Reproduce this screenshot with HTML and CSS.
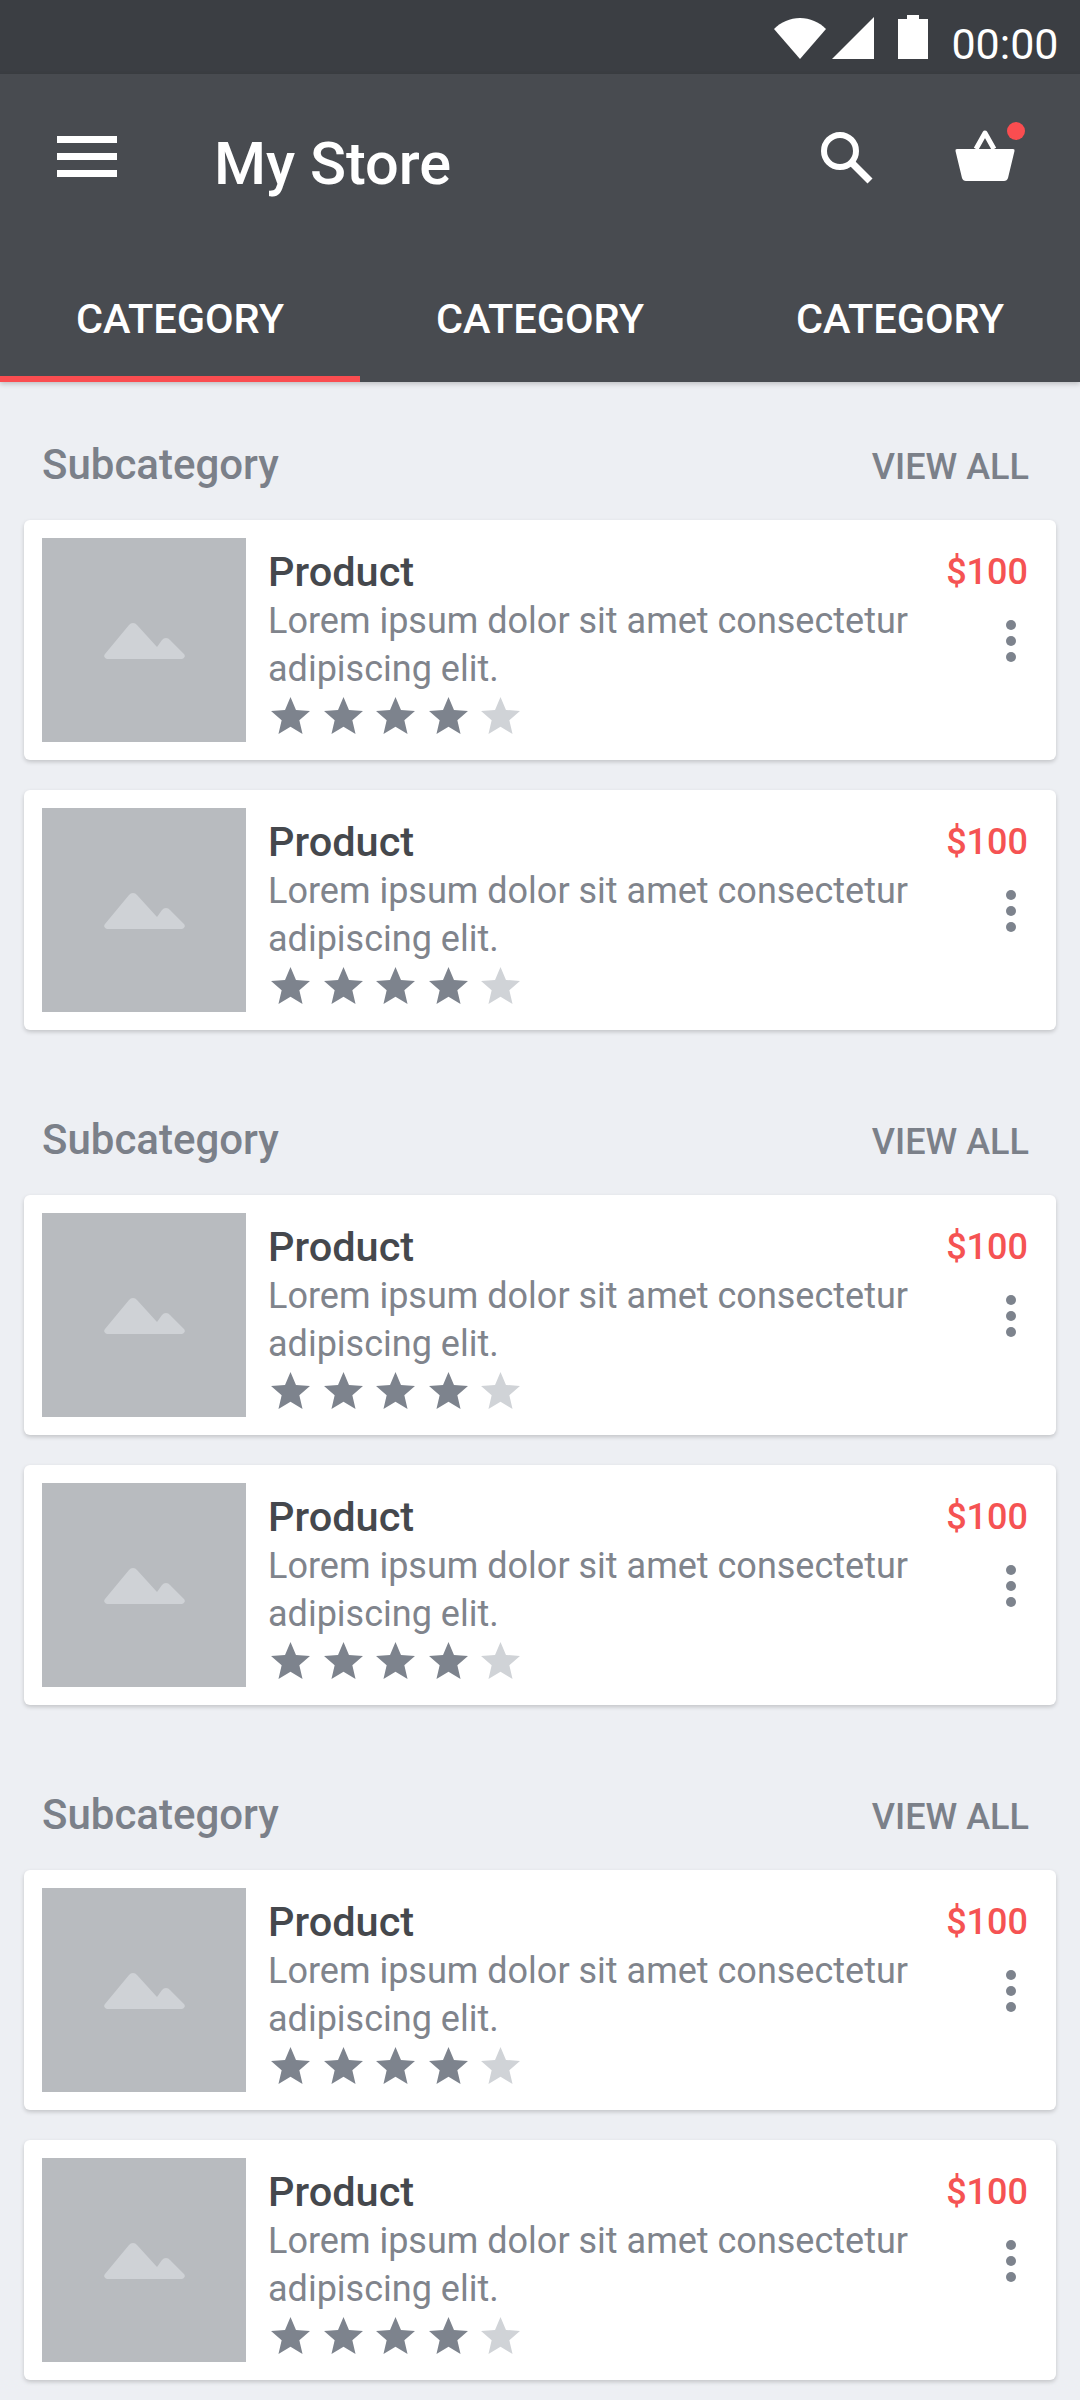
FILE: index.html
```html
<!DOCTYPE html>
<html lang="en">
<head>
    <meta charset="UTF-8">
    <meta name="viewport" content="width=device-width, initial-scale=1.0">
    <title>My Store</title>
    <link rel="stylesheet" href="styles.css">
</head>
<body>
    <svg class="sprites" width="0" height="0">
        <symbol id="star" viewBox="2 2 20 19"><path d="M12 17.27L18.18 21l-1.64-7.03L22 9.24l-7.19-.61L12 2 9.19 8.63 2 9.24l5.46 4.73L5.82 21z"/></symbol>
        <symbol id="mountain" viewBox="0 0 81 37"><path d="M3 37a3 3 0 0 1-2-5L25 3a5 5 0 0 1 8 0l20 22 5-7a5 5 0 0 1 8 0l14 14a3 3 0 0 1-2 5z"/></symbol>
        <symbol id="kebab" viewBox="0 0 10 42"><circle cx="5" cy="5" r="5"/><circle cx="5" cy="21" r="5"/><circle cx="5" cy="37" r="5"/></symbol>
    </svg>

    <div class="status-bar">
        <svg class="wifi" width="52" height="41" viewBox="0 0 52 41"><path d="M26 41L0 11C7 4 16 0 26 0s19 4 26 11z"/></svg>
        <svg class="signal" width="42" height="42" viewBox="0 0 42 42"><path d="M0 42L42 0v42z"/></svg>
        <svg class="battery" width="30" height="44" viewBox="0 0 30 44"><path d="M9 0h12v4h9v40H0V4h9z"/></svg>
        <span class="clock">00:00</span>
    </div>

    <header class="app-bar">
        <div class="toolbar">
            <div class="menu-icon"><span></span><span></span><span></span></div>
            <h1>My Store</h1>
            <svg class="search-icon" width="52" height="52" viewBox="0 0 52 52"><circle cx="19" cy="19" r="16" fill="none" stroke="#fff" stroke-width="6"/><path d="M31 31l18 18" stroke="#fff" stroke-width="7"/></svg>
            <div class="basket">
                <svg width="60" height="51" viewBox="0 0 60 51"><path d="M21 19L30 3l9 16" fill="none" stroke="#fff" stroke-width="5" stroke-linejoin="round"/><path d="M2 19h56q2 0 1.500 2L53 48q-1 3-4 3H11q-3 0-4-3L.5 21Q0 19 2 19z" fill="#fff"/></svg>
                <span class="badge"></span>
            </div>
        </div>
        <nav class="tabs">
            <div class="tab active">CATEGORY</div>
            <div class="tab">CATEGORY</div>
            <div class="tab">CATEGORY</div>
        </nav>
    </header>

    <main class="content">
        <section class="section">
            <div class="section-head"><h2>Subcategory</h2><span class="view-all">VIEW ALL</span></div>
            <article class="card">
                <div class="thumb"><svg width="81" height="37"><use href="#mountain"/></svg></div>
                <div class="info">
                    <div class="name">Product</div>
                    <p class="desc">Lorem ipsum dolor sit amet consectetur adipiscing elit.</p>
                    <div class="stars"><svg><use href="#star"/></svg><svg><use href="#star"/></svg><svg><use href="#star"/></svg><svg><use href="#star"/></svg><svg class="off"><use href="#star"/></svg></div>
                </div>
                <div class="side"><span class="price">$100</span><svg class="more" width="10" height="42"><use href="#kebab"/></svg></div>
            </article>
            <article class="card">
                <div class="thumb"><svg width="81" height="37"><use href="#mountain"/></svg></div>
                <div class="info">
                    <div class="name">Product</div>
                    <p class="desc">Lorem ipsum dolor sit amet consectetur adipiscing elit.</p>
                    <div class="stars"><svg><use href="#star"/></svg><svg><use href="#star"/></svg><svg><use href="#star"/></svg><svg><use href="#star"/></svg><svg class="off"><use href="#star"/></svg></div>
                </div>
                <div class="side"><span class="price">$100</span><svg class="more" width="10" height="42"><use href="#kebab"/></svg></div>
            </article>
        </section>

        <section class="section">
            <div class="section-head"><h2>Subcategory</h2><span class="view-all">VIEW ALL</span></div>
            <article class="card">
                <div class="thumb"><svg width="81" height="37"><use href="#mountain"/></svg></div>
                <div class="info">
                    <div class="name">Product</div>
                    <p class="desc">Lorem ipsum dolor sit amet consectetur adipiscing elit.</p>
                    <div class="stars"><svg><use href="#star"/></svg><svg><use href="#star"/></svg><svg><use href="#star"/></svg><svg><use href="#star"/></svg><svg class="off"><use href="#star"/></svg></div>
                </div>
                <div class="side"><span class="price">$100</span><svg class="more" width="10" height="42"><use href="#kebab"/></svg></div>
            </article>
            <article class="card">
                <div class="thumb"><svg width="81" height="37"><use href="#mountain"/></svg></div>
                <div class="info">
                    <div class="name">Product</div>
                    <p class="desc">Lorem ipsum dolor sit amet consectetur adipiscing elit.</p>
                    <div class="stars"><svg><use href="#star"/></svg><svg><use href="#star"/></svg><svg><use href="#star"/></svg><svg><use href="#star"/></svg><svg class="off"><use href="#star"/></svg></div>
                </div>
                <div class="side"><span class="price">$100</span><svg class="more" width="10" height="42"><use href="#kebab"/></svg></div>
            </article>
        </section>

        <section class="section">
            <div class="section-head"><h2>Subcategory</h2><span class="view-all">VIEW ALL</span></div>
            <article class="card">
                <div class="thumb"><svg width="81" height="37"><use href="#mountain"/></svg></div>
                <div class="info">
                    <div class="name">Product</div>
                    <p class="desc">Lorem ipsum dolor sit amet consectetur adipiscing elit.</p>
                    <div class="stars"><svg><use href="#star"/></svg><svg><use href="#star"/></svg><svg><use href="#star"/></svg><svg><use href="#star"/></svg><svg class="off"><use href="#star"/></svg></div>
                </div>
                <div class="side"><span class="price">$100</span><svg class="more" width="10" height="42"><use href="#kebab"/></svg></div>
            </article>
            <article class="card">
                <div class="thumb"><svg width="81" height="37"><use href="#mountain"/></svg></div>
                <div class="info">
                    <div class="name">Product</div>
                    <p class="desc">Lorem ipsum dolor sit amet consectetur adipiscing elit.</p>
                    <div class="stars"><svg><use href="#star"/></svg><svg><use href="#star"/></svg><svg><use href="#star"/></svg><svg><use href="#star"/></svg><svg class="off"><use href="#star"/></svg></div>
                </div>
                <div class="side"><span class="price">$100</span><svg class="more" width="10" height="42"><use href="#kebab"/></svg></div>
            </article>
        </section>
    </main>
</body>
</html>
```

FILE: styles.css
```css
* {
    box-sizing: border-box;
}
body {
    font-family: Roboto, "Liberation Sans", sans-serif;
    margin: 0;
    width: 1080px;
    height: 2400px;
    overflow: hidden;
    background-color: #edeff3;
}
.sprites {
    position: absolute;
}

/* status bar */
.status-bar {
    display: flex;
    justify-content: flex-end;
    align-items: baseline;
    height: 74px;
    padding: 15px 21.5px 0 0;
    background-color: #3b3e43;
    color: #fff;
}
.status-bar svg {
    fill: #fff;
}
.signal {
    margin-left: 6px;
}
.battery {
    margin-left: 24px;
}
.clock {
    margin-left: 23.5px;
    font-size: 43px;
    line-height: 42px;
}

/* app bar */
.app-bar {
    position: relative;
    background-color: #484b50;
    color: #fff;
    box-shadow: 0 2px 5px rgba(0, 0, 0, 0.2);
}
.toolbar {
    display: flex;
    align-items: flex-start;
    height: 198px;
    padding: 56px 65px 0 57px;
}
.menu-icon {
    display: flex;
    flex-direction: column;
    gap: 10px;
    width: 60px;
    margin-top: 6px;
}
.menu-icon span {
    height: 7px;
    background-color: #fff;
}
h1 {
    margin: -1px 0 0 97px;
    font-size: 59.5px;
    font-weight: 500;
    line-height: 70px;
}
.search-icon {
    margin: 2px 0 0 auto;
}
.basket {
    position: relative;
    width: 60px;
    height: 51px;
    margin-left: 82px;
}
.basket svg {
    display: block;
}
.badge {
    position: absolute;
    top: -8px;
    right: -10px;
    width: 18px;
    height: 18px;
    border-radius: 50%;
    background-color: #fa4d50;
}
.tabs {
    display: flex;
}
.tab {
    width: 360px;
    height: 110px;
    padding-top: 24px;
    border-bottom: 6px solid transparent;
    font-size: 41.5px;
    font-weight: 500;
    line-height: 46px;
    text-align: center;
}
.tab.active {
    border-bottom-color: #fa4d50;
}

/* list */
.content {
    padding: 0 24px;
}
.section + .section {
    margin-top: 27px;
}
.section-head {
    display: flex;
    justify-content: space-between;
    align-items: center;
    height: 138px;
    padding: 60px 27px 32px 18px;
    color: #7b8089;
}
h2 {
    margin: 0;
    font-size: 42px;
    font-weight: 500;
    line-height: 46px;
}
.view-all {
    margin-top: 3px;
    font-size: 36px;
    font-weight: 500;
}
.card {
    display: flex;
    height: 240px;
    padding: 18px 28px 18px 18px;
    border-radius: 6px;
    background-color: #fff;
    box-shadow: 0 2px 4px rgba(0, 0, 0, 0.18);
}
.card + .card {
    margin-top: 30px;
}
.thumb {
    display: flex;
    justify-content: center;
    align-items: center;
    flex: none;
    width: 204px;
    height: 204px;
    background-color: #b8bbbf;
}
.thumb svg {
    fill: #cfd2d6;
}
.info {
    flex: 1;
    padding: 9px 0 0 22px;
}
.name {
    font-size: 41.5px;
    font-weight: 500;
    line-height: 50px;
    color: #45484d;
}
.desc {
    margin: 0;
    font-size: 36px;
    line-height: 48px;
    color: #80848c;
}
.stars {
    display: flex;
    gap: 13.5px;
    margin: 4px 0 0 3px;
}
.stars svg {
    width: 39px;
    height: 37px;
    fill: #7d838d;
}
.stars svg.off {
    fill: #d0d3d7;
}
.side {
    display: flex;
    flex-direction: column;
    align-items: flex-end;
    flex: none;
    width: 90px;
}
.price {
    margin-top: 9px;
    font-size: 36px;
    font-weight: 500;
    line-height: 50px;
    color: #f55353;
}
.more {
    margin: 23px 12px 0 0;
    fill: #7d838d;
}
```
